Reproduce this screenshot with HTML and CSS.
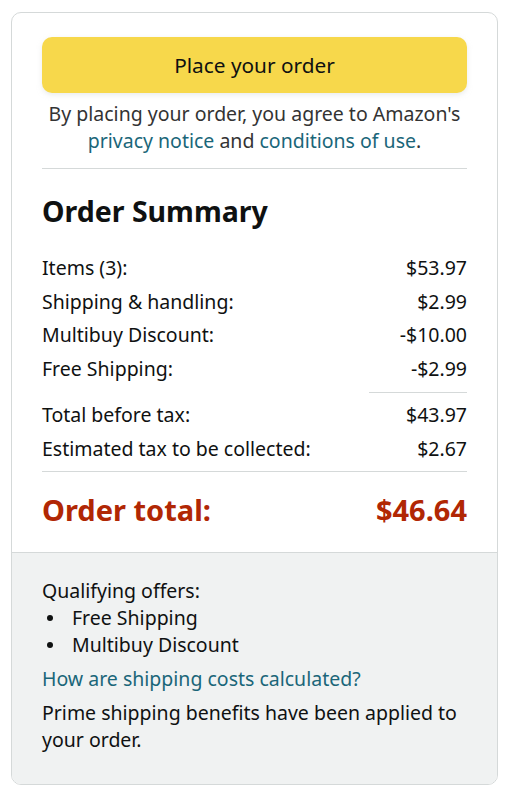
FILE: index.html
```html
<!DOCTYPE html>
<html>
<head>
<meta charset="utf-8">
<link rel="stylesheet" href="styles.css">
</head>
<body>
<div class="card">
  <div class="main">
    <button class="place-btn">Place your order</button>
    <p class="agree">By placing your order, you agree to Amazon's <a href="#">privacy notice</a> and <a href="#">conditions of use</a>.</p>
    <hr class="divider">
    <h2 class="title">Order Summary</h2>
    <div class="rows">
      <div class="row"><span>Items (3):</span><span>$53.97</span></div>
      <div class="row"><span>Shipping &amp; handling:</span><span>$2.99</span></div>
      <div class="row"><span>Multibuy Discount:</span><span>-$10.00</span></div>
      <div class="row"><span>Free Shipping:</span><span>-$2.99</span></div>
    </div>
    <hr class="divider short">
    <div class="rows">
      <div class="row"><span>Total before tax:</span><span>$43.97</span></div>
      <div class="row"><span>Estimated tax to be collected:</span><span>$2.67</span></div>
    </div>
    <hr class="divider tight">
    <div class="total"><span>Order total:</span><span>$46.64</span></div>
  </div>
  <div class="foot">
    <div class="line">Qualifying offers:</div>
    <ul class="offers">
      <li>Free Shipping</li>
      <li>Multibuy Discount</li>
    </ul>
    <a class="link" href="#">How are shipping costs calculated?</a>
    <p class="prime">Prime shipping benefits have been applied to your order.</p>
  </div>
</div>
</body>
</html>
```

FILE: styles.css
```css
* { box-sizing: border-box; }
body {
  margin: 0;
  background: #ffffff;
  font-family: "Noto Sans", "Liberation Sans", Arial, sans-serif;
  color: #0f1111;
  font-size: 19.5px;
}
.card {
  margin: 12px 0 0 11px;
  width: 487px;
  border: 1px solid #d5d9d9;
  border-radius: 10px;
  overflow: hidden;
}
.main {
  padding: 24px 30px 22px 30px;
  display: flex;
  flex-direction: column;
}
.place-btn {
  display: block;
  width: 100%;
  height: 56px;
  border: none;
  border-radius: 10px;
  background: #f7d84b;
  font-family: inherit;
  font-size: 20.8px;
  color: #0f1111;
  box-shadow: 0 2px 5px rgba(213, 217, 217, 0.5);
  padding: 0;
}
.agree {
  margin: 7px 0 0;
  text-align: center;
  line-height: 27px;
  color: #333;
}
.agree a, .link {
  color: #1a6679;
  text-decoration: none;
}
.divider {
  border: none;
  border-top: 1px solid #d5d9d9;
  margin: 14px 0 0;
  height: 0;
  width: 100%;
}
.divider.short {
  width: 98px;
  align-self: flex-end;
  margin-top: 7px;
  margin-bottom: 5px;
}
.divider.tight {
  margin-top: 6px;
}
.title {
  margin: 26px 0 24px;
  font-size: 28.5px;
  line-height: 32px;
  font-weight: bold;
}
.row {
  display: flex;
  justify-content: space-between;
  line-height: 33.5px;
}
.total {
  display: flex;
  justify-content: space-between;
  margin-top: 18px;
  font-size: 29px;
  line-height: 40px;
  font-weight: bold;
  color: #b12704;
}
.foot {
  background: #f0f2f2;
  border-top: 1px solid #d5d9d9;
  padding: 24px 30px 31px;
  line-height: 27px;
}
.offers {
  margin: 0;
  padding: 0;
  list-style: none;
}
.offers li {
  display: flex;
  align-items: center;
}
.offers li::before {
  content: "";
  width: 6px;
  height: 6px;
  border-radius: 50%;
  background: #0f1111;
  margin: 0 19px 0 5px;
}
.link {
  display: block;
  margin-top: 7px;
}
.prime {
  margin: 7px 0 0;
}
```
